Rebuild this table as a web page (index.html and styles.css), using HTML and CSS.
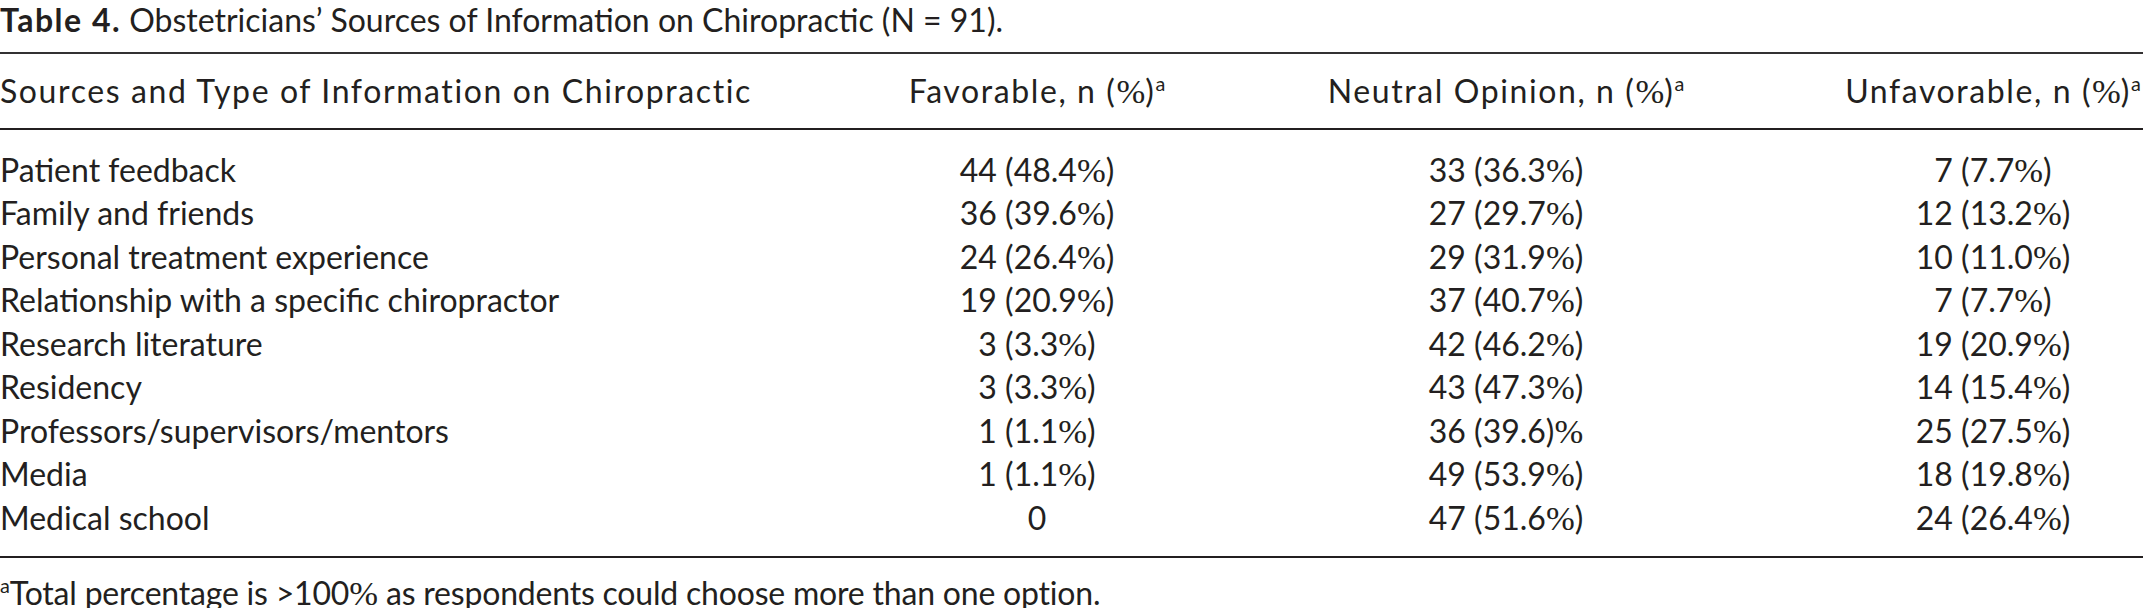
FILE: index.html
```html
<!DOCTYPE html>
<html lang="en">
<head>
<meta charset="utf-8">
<title>Table 4</title>
<link rel="stylesheet" href="styles.css">
</head>
<body>
<div class="page">
  <p class="caption"><b>Table 4.</b> Obstetricians’ Sources of Information on Chiropractic (N = 91).</p>
  <div class="table">
    <div class="thead">
      <div class="row">
        <div class="c1">Sources and Type of Information on Chiropractic</div>
        <div class="cn">Favorable, n (<span class="pct">%</span>)<sup>a</sup></div>
        <div class="cn">Neutral Opinion, n (<span class="pct">%</span>)<sup>a</sup></div>
        <div class="cn">Unfavorable, n (<span class="pct">%</span>)<sup>a</sup></div>
      </div>
    </div>
    <div class="tbody">
      <div class="row"><div class="c1">Patient feedback</div><div class="cn">44 (48.4<span class="pct">%</span>)</div><div class="cn">33 (36.3<span class="pct">%</span>)</div><div class="cn">7 (7.7<span class="pct">%</span>)</div></div>
      <div class="row"><div class="c1">Family and friends</div><div class="cn">36 (39.6<span class="pct">%</span>)</div><div class="cn">27 (29.7<span class="pct">%</span>)</div><div class="cn">12 (13.2<span class="pct">%</span>)</div></div>
      <div class="row"><div class="c1">Personal treatment experience</div><div class="cn">24 (26.4<span class="pct">%</span>)</div><div class="cn">29 (31.9<span class="pct">%</span>)</div><div class="cn">10 (11.0<span class="pct">%</span>)</div></div>
      <div class="row"><div class="c1">Relationship with a specific chiropractor</div><div class="cn">19 (20.9<span class="pct">%</span>)</div><div class="cn">37 (40.7<span class="pct">%</span>)</div><div class="cn">7 (7.7<span class="pct">%</span>)</div></div>
      <div class="row"><div class="c1">Research literature</div><div class="cn">3 (3.3<span class="pct">%</span>)</div><div class="cn">42 (46.2<span class="pct">%</span>)</div><div class="cn">19 (20.9<span class="pct">%</span>)</div></div>
      <div class="row"><div class="c1">Residency</div><div class="cn">3 (3.3<span class="pct">%</span>)</div><div class="cn">43 (47.3<span class="pct">%</span>)</div><div class="cn">14 (15.4<span class="pct">%</span>)</div></div>
      <div class="row"><div class="c1">Professors/supervisors/mentors</div><div class="cn">1 (1.1<span class="pct">%</span>)</div><div class="cn">36 (39.6)<span class="pct">%</span></div><div class="cn">25 (27.5<span class="pct">%</span>)</div></div>
      <div class="row"><div class="c1">Media</div><div class="cn">1 (1.1<span class="pct">%</span>)</div><div class="cn">49 (53.9<span class="pct">%</span>)</div><div class="cn">18 (19.8<span class="pct">%</span>)</div></div>
      <div class="row"><div class="c1">Medical school</div><div class="cn">0</div><div class="cn">47 (51.6<span class="pct">%</span>)</div><div class="cn">24 (26.4<span class="pct">%</span>)</div></div>
    </div>
  </div>
  <p class="note"><sup>a</sup>Total percentage is &gt;100<span class="pct">%</span> as respondents could choose more than one option.</p>
</div>
</body>
</html>
```

FILE: styles.css
```css
html, body {
  margin: 0;
  padding: 0;
  background: #ffffff;
}

body {
  font-family: "Lato", "Open Sans", sans-serif;
  font-size: 32px;
  color: #231f20;
}

.page {
  width: 2143px;
}

.caption {
  margin: 0;
  line-height: 39px;
  white-space: nowrap;
}

.caption b {
  font-weight: 700;
  letter-spacing: 1.5px;
}

.table {
  margin-top: 12.5px;
}

.thead {
  border-top: 2px solid #333132;
  border-bottom: 2px solid #231f20;
  padding: 15.4px 0 16px;
}

.tbody {
  border-bottom: 2px solid #231f20;
  padding: 17.4px 0 16.6px;
}

.row {
  display: grid;
  grid-template-columns: 758px 264px 380px 300px;
  column-gap: 147px;
  line-height: 43.5px;
  white-space: nowrap;
}

.thead .row {
  letter-spacing: 1.6px;
}

.c1 {
  text-align: left;
}

.cn {
  justify-self: center;
  text-align: center;
}

.pct {
  font-family: "Liberation Serif", "Times New Roman", serif;
  font-weight: 400;
  font-size: 1.08em;
  line-height: 0;
  letter-spacing: 0;
}

sup {
  font-size: 0.62em;
  line-height: 0;
  vertical-align: 0.62em;
  letter-spacing: 0;
}

.note {
  margin: 20.6px 0 0;
  line-height: 30px;
  white-space: nowrap;
  letter-spacing: -0.2px;
}
```
